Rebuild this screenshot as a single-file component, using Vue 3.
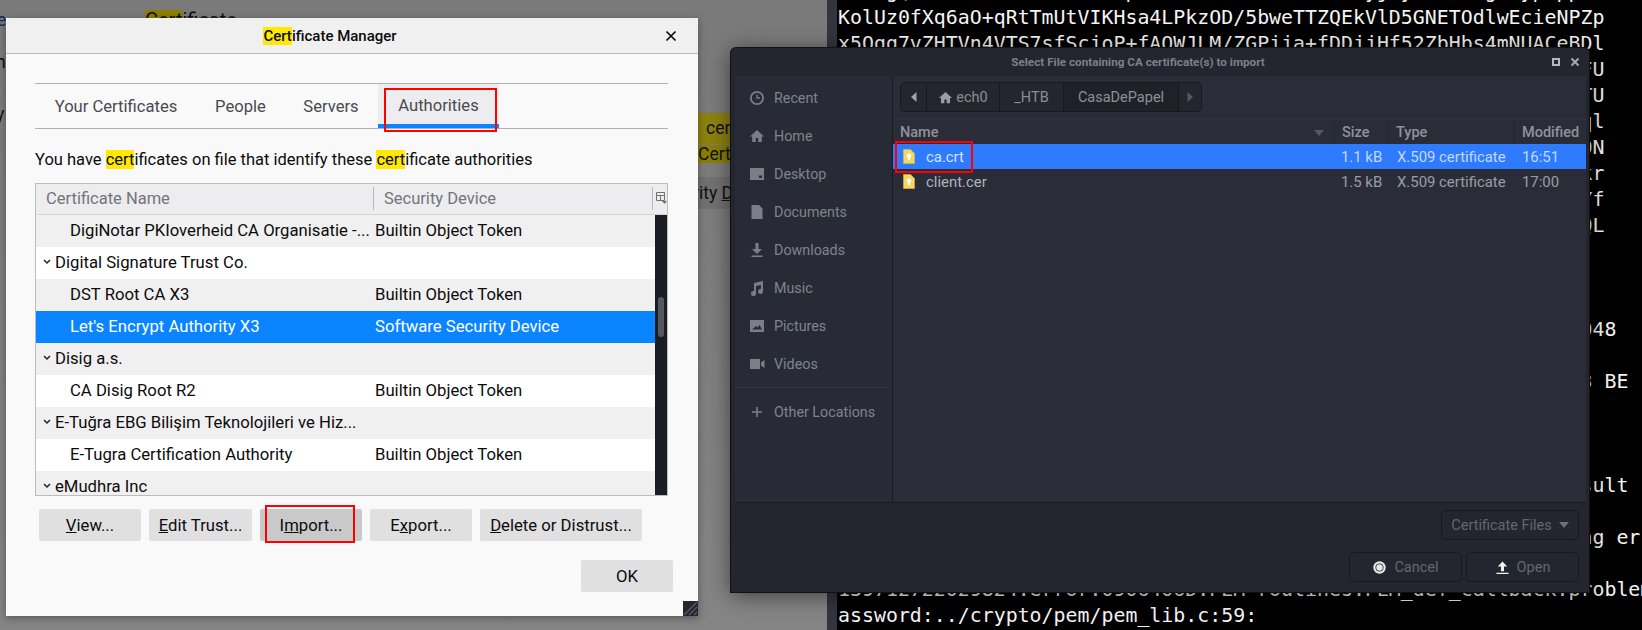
<script setup>
const certRows = [
  { name: 'DigiNotar PKIoverheid CA Organisatie -...', dev: 'Builtin Object Token', tone: 'odd' },
  { name: 'Digital Signature Trust Co.', group: true, tone: 'even' },
  { name: 'DST Root CA X3', dev: 'Builtin Object Token', tone: 'odd' },
  { name: "Let's Encrypt Authority X3", dev: 'Software Security Device', tone: 'sel' },
  { name: 'Disig a.s.', group: true, tone: 'odd' },
  { name: 'CA Disig Root R2', dev: 'Builtin Object Token', tone: 'even' },
  { name: 'E-Tuğra EBG Bilişim Teknolojileri ve Hiz...', group: true, tone: 'odd' },
  { name: 'E-Tugra Certification Authority', dev: 'Builtin Object Token', tone: 'even' },
  { name: 'eMudhra Inc', group: true, tone: 'odd' }
]
const places = [
  { label: 'Recent', d: 'M8 1a7 7 0 1 0 0 14A7 7 0 0 0 8 1zm0 1.8a5.2 5.2 0 1 1 0 10.4A5.2 5.2 0 0 1 8 2.800zM7.300 4.500v4.200h3.700V7.300H8.700V4.500z' },
  { label: 'Home', d: 'M8 2 1 8.500h2.200V14h3.600v-4h2.400v4h3.600V8.500H15z' },
  { label: 'Desktop', d: 'M1 2h14v12H1zM10 9.500V12h3V9.500z' },
  { label: 'Documents', d: 'M2.500 1H10l3.500 3.500V15h-11z' },
  { label: 'Downloads', d: 'M6.500 1h3v6H13l-5 5-5-5h3.500zM2.500 13.500h11V15h-11z' },
  { label: 'Music', d: 'M5 3l9-2v10.500a2.500 2.500 0 1 1-2-2.400V5L7 6v7.500A2.500 2.500 0 1 1 5 11.100z' },
  { label: 'Pictures', d: 'M1 2h14v12H1zm2 9.500h10L10.500 7 8.500 9.500 7 8z' },
  { label: 'Videos', d: 'M1 3h10v10H1zm11 3.500L15.500 4v8L12 9.500z' }
]
const files = [
  { name: 'ca.crt', size: '1.1 kB', type: 'X.509 certificate', mod: '16:51', sel: true },
  { name: 'client.cer', size: '1.5 kB', type: 'X.509 certificate', mod: '17:00' }
]
const edge = (s, col = 63) => s.padStart(col + 1)
const lines = [
  'aXObg(T3kRWn8mLd2EvH7sZfpKdNe1UcO5tBhAa0xWi3yjxyHkRLeTgabypxppAc',
  'KolUz0fXq6aO+qRtTmUtVIKHsa4LPkzOD/5bweTTZQEkVlD5GNETOdlwEcieNPZp',
  'x5Qgg7vZHTVn4VTS7sfScjoP+fAOWJLM/ZGPjja+fDDjjHf52ZbHbs4mNUACeBDl',
  edge('FU'), edge('TU'), edge('ql'), edge('ON'), edge('kr'), edge('Yf'), edge('QL'),
  '', '', '',
  edge('048', 64),
  '',
  edge('3 BE', 65),
  '', '', '',
  edge('sult', 65),
  '',
  edge('ng er', 66),
  '',
  '139712722029824:error:0906406D:PEM routines:PEM_def_callback:problems getting p',
  'assword:../crypto/pem/pem_lib.c:59:'
]
</script>

<template>
  <div class="desk">
    <div class="page">
      <span class="frag f-title"><i>Cert</i>ificate</span>
      <span class="frag f-e">e</span>
      <span class="frag f-h">h</span>
      <span class="frag f-y">y</span>
      <div class="frag f-tip">cer</div>
      <div class="frag f-certi"><i>Cert</i>i</div>
      <div class="frag f-band">rity <u>D</u></div>
    </div>
    <div class="strip"></div>
    <div class="term">
      <pre class="term-text"><template v-for="(l, i) in lines" :key="i">{{ l }}
</template></pre>
    </div>

    <section class="cm">
      <header class="cm-title">
        <span class="cm-title-text"><mark>Cert</mark>ificate Manager</span>
        <svg class="cm-close" viewBox="0 0 12 12" width="12" height="12"><path d="M1.500 1.500l9 9M10.500 1.500l-9 9" stroke="#0c0c0d" stroke-width="1.700" fill="none" /></svg>
      </header>
      <div class="cm-body">
        <nav class="tabs">
          <span class="tab">Your Certificates</span>
          <span class="tab">People</span>
          <span class="tab">Servers</span>
          <span class="tab active">Authorities<b class="red red-tab"></b></span>
        </nav>
        <p class="desc">You have <mark>cert</mark>ificates on file that identify these <mark>cert</mark>ificate authorities</p>
        <div class="tree">
          <div class="tree-head">
            <span class="th th-name">Certificate Name</span>
            <span class="th th-dev">Security Device</span>
            <svg class="picker" viewBox="0 0 11 12" width="11" height="12"><path d="M.500.500h8v8h-8zM.500 3.500h8M4.500 3.500v5" stroke="#6f6f73" fill="none" /><path d="M6 9h5l-2.500 3z" fill="#6f6f73" /></svg>
          </div>
          <div class="tree-main">
            <div class="tree-rows">
              <div v-for="r in certRows" :key="r.name" class="tree-row" :class="r.tone">
                <span class="cell-name" :class="{ grp: r.group }">
                  <svg v-if="r.group" class="twisty" viewBox="0 0 8 6" width="8" height="6"><path d="M1 1l3 3 3-3" stroke="#222" stroke-width="1.500" fill="none" /></svg>
                  {{ r.name }}
                </span>
                <span class="cell-dev">{{ r.dev }}</span>
              </div>
            </div>
            <div class="scroll"><div class="thumb"></div></div>
          </div>
        </div>
        <div class="actions">
          <button class="btn w102"><u>V</u>iew...</button>
          <button class="btn w103"><u>E</u>dit Trust...</button>
          <button class="btn w102 pressed">I<u>m</u>port...<b class="red red-import"></b></button>
          <button class="btn w102">E<u>x</u>port...</button>
          <button class="btn w162"><u>D</u>elete or Distrust...</button>
        </div>
        <div class="ok-row"><button class="btn ok">OK</button></div>
      </div>
      <div class="grip">
        <svg viewBox="0 0 15 15" width="15" height="15"><path d="M1 14 14 1M6 14l8-8M11 14l3-3" stroke="#5a5d66" stroke-width="1.200" /></svg>
      </div>
    </section>

    <section class="fc">
      <header class="fc-title">
        <span class="fc-title-text">Select File containing CA certificate(s) to import</span>
        <span class="fc-max"></span>
        <svg class="fc-x" viewBox="0 0 10 10" width="10" height="10"><path d="M1.500 1.500l7 7M8.500 1.500l-7 7" stroke="#a9acb3" stroke-width="1.800" fill="none" /></svg>
      </header>
      <div class="fc-main">
        <aside class="side">
          <div v-for="p in places" :key="p.label" class="place">
            <svg class="place-ico" viewBox="0 0 16 16" width="16" height="16"><path :d="p.d" fill="#7b7e86" fill-rule="evenodd" /></svg>
            <span>{{ p.label }}</span>
          </div>
          <div class="side-sep"></div>
          <div class="place">
            <svg class="place-ico" viewBox="0 0 16 16" width="16" height="16"><path d="M7.200 3h1.600v4.200H13v1.600H8.800V13H7.200V8.800H3V7.200h4.200z" fill="#7b7e86" /></svg>
            <span>Other Locations</span>
          </div>
        </aside>
        <div class="pane">
          <div class="crumbs">
            <span class="crumb c-back"><svg viewBox="0 0 6 10" width="6" height="10"><path d="M5.500 0v10L0 5z" fill="#a0a3aa" /></svg></span>
            <span class="crumb c-home"><svg viewBox="0 0 16 16" width="15" height="15"><path d="M8 2 1 8.500h2.200V14h3.600v-4h2.400v4h3.600V8.500H15z" fill="#9a9da4" /></svg>ech0</span>
            <span class="crumb c-htb">_HTB</span>
            <span class="crumb c-cur">CasaDePapel</span>
            <span class="crumb c-fwd"><svg viewBox="0 0 6 10" width="6" height="10"><path d="M.500 0v10L6 5z" fill="#565963" /></svg></span>
          </div>
          <div class="list-head list-grid">
            <span class="col c1">Name<svg class="sort" viewBox="0 0 10 6" width="10" height="6"><path d="M0 0h10L5 6z" fill="#565963" /></svg></span>
            <span class="col c2">Size</span>
            <span class="col c3">Type</span>
            <span class="col c4">Modified</span>
          </div>
          <div v-for="f in files" :key="f.name" class="file list-grid" :class="{ sel: f.sel }">
            <span class="fname">
              <svg viewBox="0 0 12 15" width="12" height="15"><path d="M.500.500h7l4 4v10H.500z" fill="#f6d860" stroke="#d8b84a" stroke-width=".6" /><circle cx="6" cy="6.800" r="2.200" fill="#fff" /><path d="M5 8.500h2V11H5z" fill="#fff" /></svg>
              {{ f.name }}
            </span>
            <span class="fsize">{{ f.size }}</span>
            <span class="ftype">{{ f.type }}</span>
            <span class="fmod">{{ f.mod }}</span>
            <b v-if="f.sel" class="red red-file"></b>
          </div>
        </div>
      </div>
      <footer class="fc-foot">
        <button class="dbtn filter">Certificate Files<svg viewBox="0 0 10 6" width="10" height="6"><path d="M0 0h10L5 6z" fill="#6c6f78" /></svg></button>
        <div class="foot-row">
          <button class="dbtn w113">
            <svg viewBox="0 0 16 16" width="15" height="15"><circle cx="8" cy="8" r="6.600" fill="#e8e8e8" /><circle cx="8" cy="8" r="4.300" fill="#2a2d37" /><circle cx="8" cy="8" r="3.400" fill="#e8e8e8" /></svg>
            Cancel
          </button>
          <button class="dbtn w113">
            <svg viewBox="0 0 16 16" width="15" height="15"><path d="M8 1.500 13 7H9.600v5H6.400V7H3zM1.500 13.500h13V15h-13z" fill="#f2f2f2" /></svg>
            Open
          </button>
        </div>
      </footer>
    </section>
  </div>
</template>

<style scoped>
.desk { position: relative; width: 1642px; height: 630px; overflow: hidden; background: #000; font-family: Roboto, "Noto Sans", sans-serif; }
.page { position: absolute; left: 0; top: 0; width: 829px; height: 630px; background: linear-gradient(#7a7a7a, #808080 60%, #858585); color: #111; overflow: hidden; }
.frag { position: absolute; font-size: 17.500px; white-space: nowrap; }
.frag i { font-style: normal; background: #8c8000; }
.f-title { left: 145px; top: 10px; font-size: 20px; line-height: 20px; }
.f-title i { display: inline-block; height: 20px; }
.f-e { left: -3px; top: 10px; color: #1a2a50; }
.f-h { left: -4px; top: 52px; }
.f-y { left: -4px; top: 104px; }
.f-tip { left: 694px; top: 113px; width: 60px; height: 31px; padding-left: 12px; box-sizing: border-box; background: #8c8210; line-height: 31px; }
.f-certi { left: 698px; top: 145px; width: 38px; height: 18px; line-height: 18px; overflow: hidden; }
.f-certi i { background: #8c8000; }
.f-band { left: 698px; top: 177px; width: 33px; height: 32px; text-indent: -5px; line-height: 32px; background: #727272; }
.strip { position: absolute; left: 827px; top: 0; width: 10px; height: 630px; background: #33353d; }
.term { position: absolute; left: 837px; top: 0; width: 805px; height: 630px; background: #000; overflow: hidden; }
.term-text { margin: -21px 0 0 1px; font-family: "DejaVu Sans Mono", "Liberation Mono", monospace; font-size: 19.9px; line-height: 26px; color: #f4f4f4; white-space: pre; }

.red { position: absolute; border: 2px solid #f00; box-sizing: border-box; pointer-events: none; }
mark { background: #ffe900; color: inherit; }

/* Certificate Manager */
.cm { position: absolute; left: 6px; top: 18px; width: 692px; height: 598px; background: #f9f9fa; display: flex; flex-direction: column; box-shadow: 0 2px 8px rgba(0,0,0,.35); color: #0c0c0d; font-size: 16.600px; }
.cm-title { flex: 0 0 36px; box-sizing: border-box; height: 36px; padding-right: 44px; background: #f0f0f0; border-bottom: 1px solid #b9b9b9; display: flex; align-items: center; justify-content: center; position: relative; }
.cm-title-text { font-size: 15px; font-weight: 500; }
.cm-close { position: absolute; right: 21px; top: 12px; }
.cm-body { padding: 29px 25px 0 29px; display: flex; flex-direction: column; }
.tabs { width: 633px; height: 46px; box-sizing: border-box; border-top: 1px solid #b1b1b1; border-bottom: 1px solid #b1b1b1; display: grid; grid-template-columns: 162px 87px 94px 121px; color: #4a4a4f; font-size: 16.600px; }
.tab { display: flex; align-items: center; justify-content: center; position: relative; }
.tab.active { background: #ededf0; box-shadow: inset 0 -4px 0 #0a84ff; padding-bottom: 1px; box-sizing: border-box; }
.red-tab { left: 6px; top: 4px; width: 113px; height: 44px; }
.desc { margin: 0; height: 54px; line-height: 61px; width: 633px; white-space: nowrap; font-size: 16.500px; }
.tree { width: 633px; height: 313px; box-sizing: border-box; border: 1px solid #bdbdbd; display: flex; flex-direction: column; background: #fff; }
.tree-head { flex: 0 0 31px; box-sizing: border-box; padding-bottom: 2px; background: #ededf0; border-bottom: 1px solid #d4d4d6; display: grid; grid-template-columns: 337px 280px 1fr; align-items: center; color: #74747a; font-size: 16.500px; }
.th { height: 23px; line-height: 23px; box-sizing: border-box; white-space: nowrap; }
.th-name { padding-left: 10px; }
.th-dev { padding-left: 10px; border-left: 1px solid #b8b8ba; border-right: 1px solid #b8b8ba; }
.picker { margin-left: 3px; }
.tree-main { flex: 1; display: flex; min-height: 0; }
.tree-rows { flex: 1; overflow: hidden; }
.tree-row { height: 32px; box-sizing: border-box; padding-bottom: 2px; display: grid; grid-template-columns: 339px 1fr; align-items: center; white-space: nowrap; font-size: 16.700px; }
.tree-row.odd { background: #f0f0f0; }
.tree-row.even { background: #fff; }
.tree-row.sel { background: #0a84ff; color: #fff; }
.cell-name { padding-left: 34px; display: flex; align-items: center; }
.cell-name.grp { padding-left: 7px; gap: 4px; }
.twisty { flex: none; }
.scroll { width: 12px; background: #1b1d24; position: relative; }
.thumb { position: absolute; left: 3px; top: 82px; width: 6px; height: 40px; border-radius: 3px; background: #55585f; }
.actions { margin: 13px 0 0 4px; display: flex; gap: 8px; }
.btn { position: relative; height: 32px; border: 0; border-radius: 2px; background: #e0e0e1; color: #0c0c0d; font: inherit; font-size: 16.700px; padding: 0; white-space: nowrap; }
.btn.pressed { background: #c9c9ca; }
.w102 { width: 102px; } .w103 { width: 103px; } .w162 { width: 162px; }
.red-import { left: 5px; top: -4px; width: 90px; height: 38px; }
.ok-row { display: flex; justify-content: flex-end; margin-top: 19px; }
.btn.ok { width: 92px; }
.grip { position: absolute; right: 0; bottom: 0; width: 15px; height: 15px; background: #23262e; line-height: 0; }

/* File chooser */
.fc { position: absolute; left: 731px; top: 48px; width: 858px; height: 544px; background: #23262f; border-radius: 5px 5px 0 0; box-shadow: 0 3px 22px rgba(0,0,0,.55), 0 0 0 1px #15171c; display: flex; flex-direction: column; color: #7f838c; font-size: 14.300px; }
.fc-title { flex: 0 0 28px; padding-right: 44px; display: flex; align-items: center; justify-content: center; position: relative; }
.fc-title-text { font-size: 11.700px; font-weight: 700; color: #7d8088; }
.fc-max { position: absolute; left: 821px; top: 10px; width: 8px; height: 8px; box-sizing: border-box; border: 2px solid #b6b8bd; }
.fc-x { position: absolute; left: 839px; top: 9px; }
.fc-main { flex: 0 0 426px; margin: 0 3px 0 4px; display: flex; border-bottom: 1px solid #181a20; background: #2a2d38; }
.side { width: 158px; box-sizing: border-box; background: #282b35; border-right: 1px solid #191b21; padding-top: 3px; }
.place { height: 38px; display: flex; align-items: center; gap: 9px; padding-left: 14px; }
.place-ico { flex: none; }
.side-sep { height: 1px; margin-top: 4px; margin-bottom: 5px; background: #31343f; }
.pane { flex: 1; display: flex; flex-direction: column; padding-top: 6px; min-width: 0; }
.crumbs { margin-left: 7px; width: 302px; height: 30px; box-sizing: border-box; border: 1px solid #17191e; border-radius: 5px; background: #23262f; display: flex; color: #8a8d95; overflow: hidden; font-size: 14.500px; }
.crumb { display: flex; align-items: center; justify-content: center; border-right: 1px solid #17191e; box-sizing: border-box; white-space: nowrap; gap: 3px; }
.c-back { width: 26px; } .c-home { width: 73px; } .c-htb { width: 64px; }
.c-cur { width: 115px; background: #1f2129; color: #8d9098; }
.c-fwd { flex: 1; border-right: 0; }
.list-grid { display: grid; grid-template-columns: 441px 54px 126px 1fr; position: relative; }
.list-head { margin-top: 7px; height: 25px; align-items: center; color: #8f929a; font-weight: 500; font-size: 14.500px; border-top: 1px solid #2f323d; box-sizing: border-box; }
.col { height: 25px; line-height: 25px; box-sizing: border-box; padding-left: 7px; border-left: 1px solid #25272f; position: relative; white-space: nowrap; }
.c1 { border-left: 0; }
.sort { position: absolute; right: 10px; top: 10px; }
.file { height: 25px; align-items: center; color: #9a9da5; white-space: nowrap; font-size: 14.900px; }
.file.sel { background: #2e7bff; color: #c3d9ff; }
.fname { padding-left: 10px; display: flex; align-items: center; gap: 11px; color: #b0b3ba; }
.file.sel .fname { color: #d5e4ff; }
.fsize { padding-left: 7px; }
.ftype { padding-left: 9px; }
.fmod { padding-left: 8px; }
.red-file { left: 2px; top: -3px; width: 78px; height: 32px; }
.fc-foot { padding: 7px 10px 0 0; display: flex; flex-direction: column; align-items: flex-end; }
.dbtn { height: 30px; box-sizing: border-box; border: 1px solid #17191e; border-radius: 5px; background: #23262f; color: #63666f; font: inherit; font-size: 14.500px; display: flex; align-items: center; justify-content: center; gap: 7px; padding: 0; white-space: nowrap; }
.filter { width: 138px; }
.foot-row { margin-top: 12px; display: flex; gap: 4px; }
.w113 { width: 113px; }
</style>
